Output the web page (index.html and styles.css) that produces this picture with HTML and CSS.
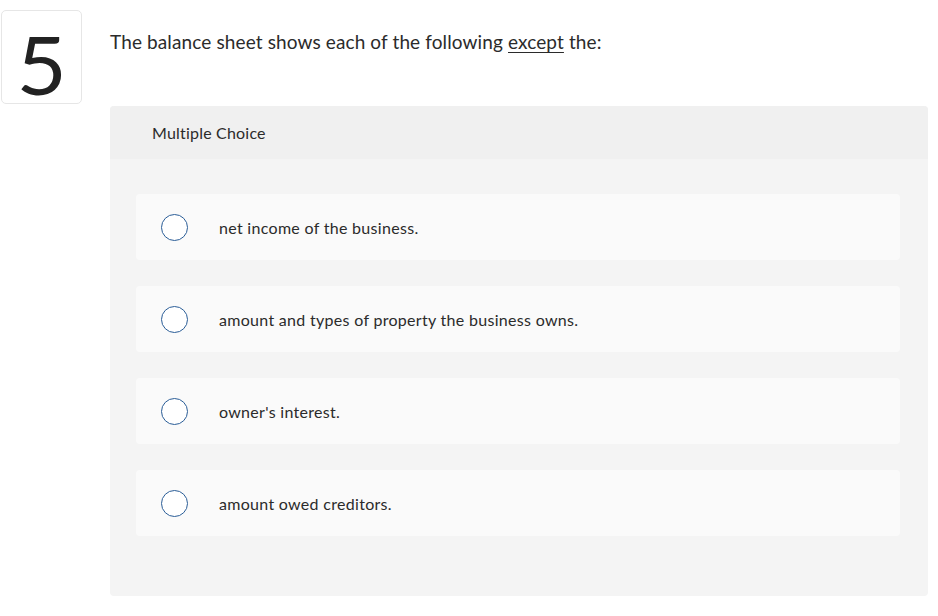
FILE: index.html
```html
<!DOCTYPE html>
<html>
<head>
<meta charset="utf-8">
<link rel="stylesheet" href="styles.css">
</head>
<body>
<div class="question">
  <div class="num-box"><span class="num">5</span></div>
  <div class="content">
    <p class="prompt">The balance sheet shows each of the following <u>except</u> the:</p>
    <div class="panel">
      <div class="panel-head">Multiple Choice</div>
      <div class="options">
        <div class="option"><span class="radio"></span><span class="label">net income of the business.</span></div>
        <div class="option"><span class="radio"></span><span class="label">amount and types of property the business owns.</span></div>
        <div class="option"><span class="radio"></span><span class="label">owner's interest.</span></div>
        <div class="option"><span class="radio"></span><span class="label">amount owed creditors.</span></div>
      </div>
    </div>
  </div>
</div>
</body>
</html>
```
FILE: styles.css
```css
html, body {
  margin: 0;
  padding: 0;
  background: #fff;
}
body {
  font-family: Lato, "Open Sans", sans-serif;
  color: #2b2b2b;
}
.question {
  display: flex;
  padding: 10px 10px 0 1px;
  gap: 28px;
}
.num-box {
  width: 79px;
  height: 92px;
  border: 1px solid #e6e6e6;
  border-radius: 5px;
  display: flex;
  align-items: center;
  justify-content: center;
  flex: none;
}
.num {
  font-family: Lato, sans-serif;
  font-size: 82px;
  font-weight: 400;
  line-height: 1;
  color: #222;
  margin-top: 12px;
  transform: scaleX(1.06);
}
.content {
  flex: 1;
  min-width: 0;
}
.prompt {
  margin: 20px 0 0 0;
  font-size: 19px;
  letter-spacing: 0.12px;
  line-height: 24px;
  color: #2b2b2b;
}
.prompt u {
  text-underline-offset: 3px;
  text-decoration-thickness: 1px;
}
.panel {
  margin-top: 52px;
  background: #f4f4f4;
  border-radius: 4px;
  height: 490px;
  box-sizing: border-box;
}
.panel-head {
  background: #f0f0f0;
  height: 53px;
  display: flex;
  align-items: center;
  padding-left: 42px;
  font-size: 16px;
  letter-spacing: 0.2px;
  color: #2b2b2b;
  border-radius: 4px 4px 0 0;
}
.options {
  padding: 35px 28px 0 26px;
  display: flex;
  flex-direction: column;
  gap: 26px;
}
.option {
  background: #fafafa;
  border-radius: 4px;
  height: 66px;
  display: flex;
  align-items: center;
  padding-left: 25px;
}
.radio {
  width: 25px;
  height: 25px;
  border: 1.5px solid #2a5d97;
  border-radius: 50%;
  background: #fff;
  flex: none;
}
.label {
  margin-left: 31px;
  font-size: 16px;
  letter-spacing: 0.3px;
  color: #2b2b2b;
}
```
